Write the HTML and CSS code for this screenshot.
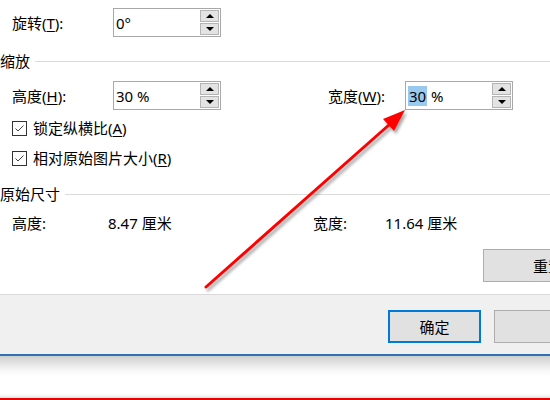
FILE: index.html
```html
<!DOCTYPE html>
<html lang="zh-CN">
<head>
  <meta charset="UTF-8" />
  <title>大小</title>
  <link rel="stylesheet" href="styles.css">
</head>
<body>
  <div class="dialog">
    <div class="content">
      <!-- Rotation -->
      <div class="row">
        <label class="label w-101">旋转(<u>T</u>):</label>
        <div class="spin">
          <span class="spin-value">0°</span>
          <div class="spin-btns">
            <span class="spin-btn"><i class="tri up"></i></span>
            <span class="spin-btn"><i class="tri down"></i></span>
          </div>
        </div>
      </div>

      <!-- Scale -->
      <div class="section-title t-scale"><span>缩放</span><span class="rule"></span></div>
      <div class="row r-scale">
        <label class="label w-101">高度(<u>H</u>):</label>
        <div class="spin">
          <span class="spin-value">30 %</span>
          <div class="spin-btns">
            <span class="spin-btn"><i class="tri up"></i></span>
            <span class="spin-btn"><i class="tri down"></i></span>
          </div>
        </div>
        <label class="label w-77 gap-left">宽度(<u>W</u>):</label>
        <div class="spin">
          <span class="spin-value"><span class="selected">30</span> %</span>
          <div class="spin-btns">
            <span class="spin-btn"><i class="tri up"></i></span>
            <span class="spin-btn"><i class="tri down"></i></span>
          </div>
        </div>
      </div>
      <div class="check-row c-first">
        <svg class="check" width="15" height="15" viewBox="0 0 15 15">
          <rect x="0.5" y="0.5" width="14" height="14" fill="#fff" stroke="#333"/>
          <path d="M3.5 7.5 L6 10 L11.5 4.5" fill="none" stroke="#444" stroke-width="1"/>
        </svg>
        <span>锁定纵横比(<u>A</u>)</span>
      </div>
      <div class="check-row c-second">
        <svg class="check" width="15" height="15" viewBox="0 0 15 15">
          <rect x="0.5" y="0.5" width="14" height="14" fill="#fff" stroke="#333"/>
          <path d="M3.5 7.5 L6 10 L11.5 4.5" fill="none" stroke="#444" stroke-width="1"/>
        </svg>
        <span>相对原始图片大小(<u>R</u>)</span>
      </div>

      <!-- Original size -->
      <div class="section-title t-orig"><span>原始尺寸</span><span class="rule"></span></div>
      <div class="info-row">
        <span class="w-96">高度:</span>
        <span class="w-205">8.47 厘米</span>
        <span class="w-72">宽度:</span>
        <span>11.64 厘米</span>
      </div>
      <div class="reset-row">
        <button class="btn reset">重置</button>
      </div>
    </div>

    <div class="footer">
      <button class="btn ok">确定</button>
      <button class="btn cancel">取消</button>
    </div>
  </div>
  <div class="below"></div>

  <!-- Red annotation arrow -->
  <svg class="arrow" width="550" height="400" viewBox="0 0 550 400">
    <defs>
      <filter id="shadow" x="-20%" y="-20%" width="140%" height="140%">
        <feDropShadow dx="2" dy="3" stdDeviation="1.5" flood-color="#000" flood-opacity="0.35"/>
      </filter>
    </defs>
    <g filter="url(#shadow)">
      <line x1="206" y1="287" x2="390" y2="124" stroke="#ff0000" stroke-width="3" stroke-linecap="round"/>
      <polygon points="405,110 383,119 394,131" fill="#ff0000"/>
    </g>
  </svg>
</body>
</html>
```

FILE: styles.css
```css
* {
  box-sizing: border-box;
}
body {
  margin: 0;
  width: 550px;
  height: 400px;
  overflow: hidden;
  position: relative;
  background: #fff;
  font-family: "Noto Sans", "Noto Sans CJK SC", sans-serif;
  font-size: 15px;
  line-height: 20px;
  color: #000;
}
u {
  text-decoration-thickness: 1px;
  text-underline-offset: 2px;
}
.dialog {
  width: 100%;
}
.content {
  height: 295px;
  padding-top: 8px;
  border-bottom: 1px solid #dadada;
  overflow: hidden;
}
.row {
  display: flex;
  align-items: center;
  height: 29px;
  padding-left: 12px;
}
.label {
  white-space: nowrap;
}
.w-101 { width: 101px; flex: none; }
.w-77 { width: 77px; flex: none; }
.w-96 { width: 96px; flex: none; }
.w-72 { width: 72px; flex: none; }
.w-205 { width: 205px; flex: none; }
.gap-left { margin-left: 107px; }

/* Spin box */
.spin {
  width: 108px;
  height: 29px;
  flex: none;
  border: 1px solid #a8a8a8;
  display: flex;
  align-items: center;
  justify-content: space-between;
  padding: 0 1px 0 2px;
  background: #fff;
}
.spin-value {
  line-height: 20px;
}
.selected {
  background: #99c9ef;
  display: inline-block;
  padding: 0 1px;
}
.spin-btns {
  display: flex;
  flex-direction: column;
  gap: 1px;
  width: 19px;
}
.spin-btn {
  height: 12px;
  background: #e3e3e3;
  border: 1px solid #b4b4b4;
  display: flex;
  align-items: center;
  justify-content: center;
}
.tri {
  width: 0;
  height: 0;
  border-left: 4px solid transparent;
  border-right: 4px solid transparent;
}
.tri.up { border-bottom: 4px solid #000; }
.tri.down { border-top: 4px solid #000; }

/* Section titles */
.section-title {
  display: flex;
  align-items: center;
  height: 20px;
  gap: 5px;
  white-space: nowrap;
}
.section-title .rule {
  flex: 1;
  border-top: 1px solid #dcdcdc;
}
.t-scale { margin-top: 14px; }
.r-scale { margin-top: 10px; }
.t-orig { margin-top: 16px; }

/* Checkboxes */
.check-row {
  display: flex;
  align-items: center;
  gap: 6px;
  height: 20px;
  padding-left: 12px;
}
.check { flex: none; }
.c-first { margin-top: 8px; }
.c-second { margin-top: 10px; }

.info-row {
  display: flex;
  align-items: center;
  height: 20px;
  margin-top: 9px;
  padding-left: 12px;
}

/* Buttons */
.btn {
  font: inherit;
  color: #000;
  background: #e1e1e1;
  border: 1px solid #adadad;
  height: 33px;
  padding: 0;
  flex: none;
}
.reset-row {
  display: flex;
  margin-top: 16px;
  padding-left: 483px;
}
.reset {
  width: 130px;
}
.footer {
  height: 61px;
  background: #f0f0f0;
  border-bottom: 2px solid #2f72b3;
  display: flex;
  align-items: flex-start;
  gap: 13px;
  padding: 15px 0 0 388px;
}
.ok {
  width: 93px;
  height: 33px;
  border: 2px solid #0078d7;
}
.cancel {
  width: 150px;
  height: 33px;
}
.below {
  height: 44px;
  background: linear-gradient(#cfcfcf 0, #f6f6f6 14px, #fff 20px, #fff 38px, #e4e4e4 42px);
  border-bottom: 2px solid #e60000;
}
.arrow {
  position: absolute;
  left: 0;
  top: 0;
  pointer-events: none;
}
```
